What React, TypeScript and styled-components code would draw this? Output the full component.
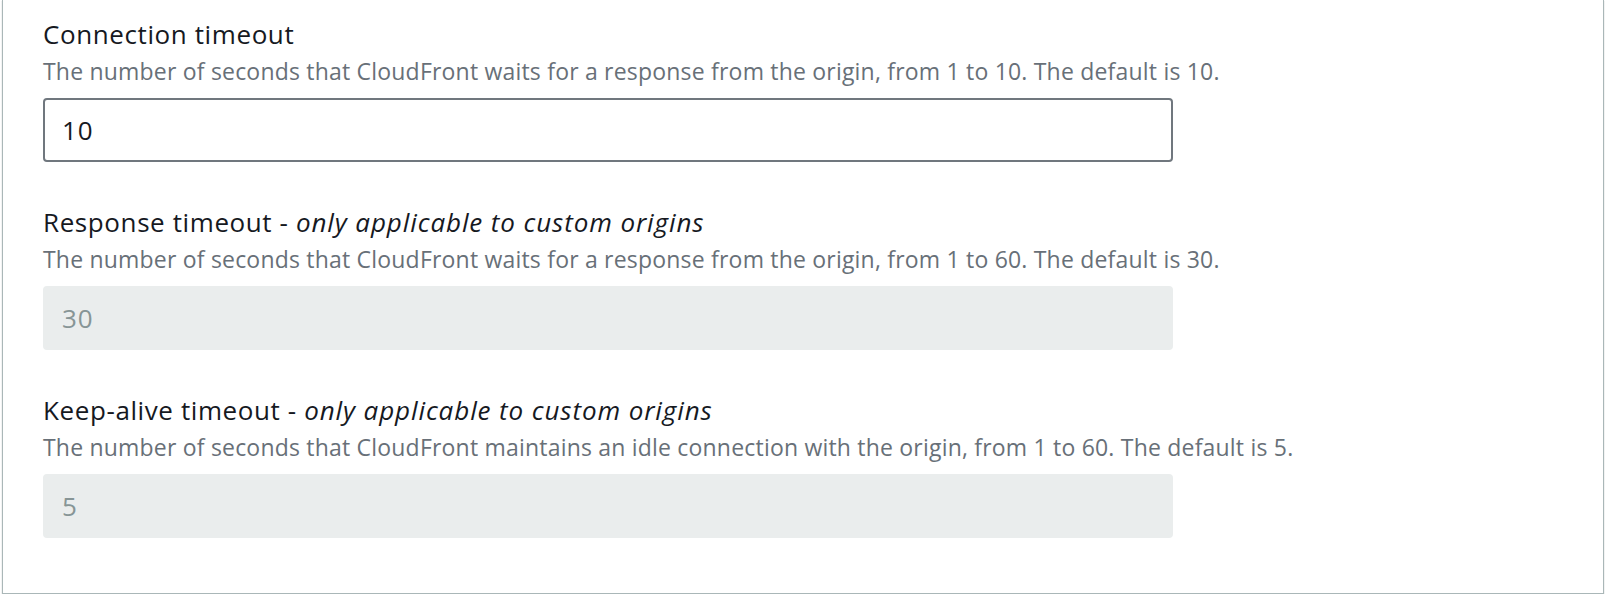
import React from "react";
import styled, { createGlobalStyle } from "styled-components";

const GlobalStyle = createGlobalStyle`
  html, body {
    margin: 0;
    padding: 0;
    background: #ffffff;
  }
  body {
    font-family: "Open Sans", "Noto Sans", Arial, sans-serif;
    -webkit-font-smoothing: antialiased;
  }
  * { box-sizing: border-box; }
`;

const Panel = styled.section`
  margin: 0 2px;
  background: #ffffff;
  border-left: 1px solid #aab7b8;
  border-right: 1px solid #aab7b8;
  border-bottom: 1px solid #aab7b8;
  box-shadow: 0 1px 1px 0 rgba(0, 28, 36, 0.3);
  padding: 19px 40px 55px;
  display: flex;
  flex-direction: column;
  gap: 45px;
`;

const Field = styled.div`
  display: flex;
  flex-direction: column;
`;

const Label = styled.label`
  font-size: 26px;
  line-height: 30px;
  letter-spacing: 0.6px;
  color: #16191f;
  font-weight: 500;
  white-space: nowrap;
`;

const Note = styled.em`
  font-style: italic;
  letter-spacing: 0.9px;
`;

const Description = styled.div`
  margin-top: 8px;
  font-size: 23px;
  line-height: 28px;
  letter-spacing: 0.2px;
  color: #687078;
  white-space: nowrap;
`;

const Input = styled.input<{ $disabled?: boolean }>`
  margin-top: 13px;
  width: 1130px;
  height: 64px;
  padding: 0 17px;
  font-family: inherit;
  font-size: 26px;
  letter-spacing: 0.8px;
  border-radius: 4px;
  outline: none;
  border: 2px solid ${(p) => (p.$disabled ? "#eaeded" : "#70777e")};
  background: ${(p) => (p.$disabled ? "#eaeded" : "#ffffff")};
  color: ${(p) => (p.$disabled ? "#879596" : "#16191f")};
  -webkit-text-fill-color: ${(p) => (p.$disabled ? "#879596" : "#16191f")};
  opacity: 1;
`;

type FieldData = {
  label: string;
  note?: string;
  description: string;
  value: string;
  disabled?: boolean;
};

const fields: FieldData[] = [
  {
    label: "Connection timeout",
    description:
      "The number of seconds that CloudFront waits for a response from the origin, from 1 to 10. The default is 10.",
    value: "10",
  },
  {
    label: "Response timeout",
    note: "only applicable to custom origins",
    description:
      "The number of seconds that CloudFront waits for a response from the origin, from 1 to 60. The default is 30.",
    value: "30",
    disabled: true,
  },
  {
    label: "Keep-alive timeout",
    note: "only applicable to custom origins",
    description:
      "The number of seconds that CloudFront maintains an idle connection with the origin, from 1 to 60. The default is 5.",
    value: "5",
    disabled: true,
  },
];

export default function App() {
  return (
    <>
      <GlobalStyle />
      <Panel>
        {fields.map((f) => (
          <Field key={f.label}>
            <Label>
              {f.label}
              {f.note ? (
                <>
                  {" - "}
                  <Note>{f.note}</Note>
                </>
              ) : null}
            </Label>
            <Description>{f.description}</Description>
            <Input
              $disabled={f.disabled}
              disabled={f.disabled}
              defaultValue={f.value}
              readOnly
            />
          </Field>
        ))}
      </Panel>
    </>
  );
}
